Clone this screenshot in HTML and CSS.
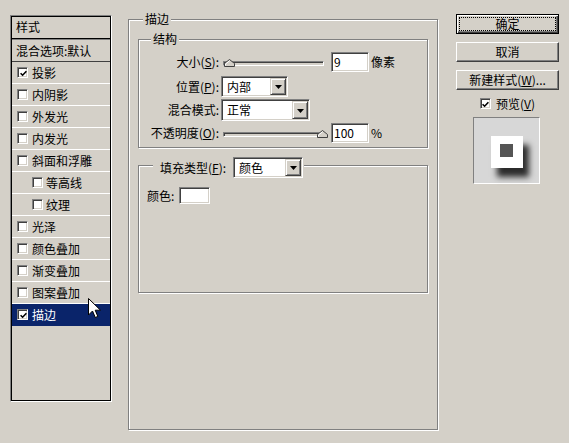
FILE: index.html
```html
<!DOCTYPE html>
<html lang="zh-CN">
<head>
<meta charset="utf-8">
<title>图层样式</title>
<link rel="stylesheet" href="styles.css">
</head>
<body>
<div class="dialog">
  <div class="styles-panel">
    <div class="panel-head">样式</div>
    <div class="panel-blend">混合选项:默认</div>
    <div class="item"><span class="cb"><svg width="7" height="7" viewBox="0 0 7 7"><path d="M0.6 3.2 L2.6 5.2 L6.4 1.2" fill="none" stroke="#000" stroke-width="1.6"/></svg></span>投影</div>
    <div class="item"><span class="cb"></span>内阴影</div>
    <div class="item"><span class="cb"></span>外发光</div>
    <div class="item"><span class="cb"></span>内发光</div>
    <div class="item"><span class="cb"></span>斜面和浮雕</div>
    <div class="item sub"><span class="cb"></span>等高线</div>
    <div class="item sub"><span class="cb"></span>纹理</div>
    <div class="item"><span class="cb"></span>光泽</div>
    <div class="item"><span class="cb"></span>颜色叠加</div>
    <div class="item"><span class="cb"></span>渐变叠加</div>
    <div class="item"><span class="cb"></span>图案叠加</div>
    <div class="item selected"><span class="cb"><svg width="7" height="7" viewBox="0 0 7 7"><path d="M0.6 3.2 L2.6 5.2 L6.4 1.2" fill="none" stroke="#000" stroke-width="1.6"/></svg></span>描边</div>
  </div>

  <div class="group main-group">
    <span class="group-title">描边</span>

    <div class="group structure">
      <span class="group-title">结构</span>

      <div class="form-row r1">
        <label class="lbl">大小(<u>S</u>):</label>
        <div class="slider">
          <div class="track"></div>
          <svg class="thumb thumb-min" width="11" height="8" viewBox="0 0 11 8"><polygon points="0.5,7.5 0.5,4.5 5.5,0.5 10.5,4.5 10.5,7.5" fill="#d4d0c8" stroke="#404040"/><path d="M1.5 6.5 V5 L5.5 1.8" fill="none" stroke="#fff"/></svg>
        </div>
        <div class="edit">9</div>
        <span class="unit">像素</span>
      </div>

      <div class="form-row r2">
        <label class="lbl">位置(<u>P</u>):</label>
        <div class="combo combo-pos"><span class="combo-text">内部</span><span class="drop"><svg width="7" height="4" viewBox="0 0 7 4"><polygon points="0,0 7,0 3.5,4" fill="#000"/></svg></span></div>
      </div>

      <div class="form-row r3">
        <label class="lbl">混合模式:</label>
        <div class="combo combo-mode"><span class="combo-text">正常</span><span class="drop"><svg width="7" height="4" viewBox="0 0 7 4"><polygon points="0,0 7,0 3.5,4" fill="#000"/></svg></span></div>
      </div>

      <div class="form-row r4">
        <label class="lbl">不透明度(<u>O</u>):</label>
        <div class="slider">
          <div class="track"></div>
          <svg class="thumb thumb-max" width="11" height="8" viewBox="0 0 11 8"><polygon points="0.5,7.5 0.5,4.5 5.5,0.5 10.5,4.5 10.5,7.5" fill="#d4d0c8" stroke="#404040"/><path d="M1.5 6.5 V5 L5.5 1.8" fill="none" stroke="#fff"/></svg>
        </div>
        <div class="edit">100</div>
        <span class="unit">%</span>
      </div>
    </div>

    <div class="group fill">
      <div class="fill-title">
        <label class="fill-lbl">填充类型(<u>F</u>):</label>
        <div class="combo combo-fill"><span class="combo-text">颜色</span><span class="drop"><svg width="7" height="4" viewBox="0 0 7 4"><polygon points="0,0 7,0 3.5,4" fill="#000"/></svg></span></div>
      </div>
      <div class="color-row">
        <label class="color-lbl">颜色:</label>
        <span class="color-swatch"></span>
      </div>
    </div>
  </div>

  <div class="side">
    <div class="btn default"><span class="focus">确定</span></div>
    <div class="btn">取消</div>
    <div class="btn">新建样式(<u>W</u>)...</div>
    <div class="preview-check"><span class="cb"><svg width="7" height="7" viewBox="0 0 7 7"><path d="M0.6 3.2 L2.6 5.2 L6.4 1.2" fill="none" stroke="#000" stroke-width="1.6"/></svg></span><span>预览(<u>V</u>)</span></div>
    <div class="preview-box">
      <div class="preview-tile"><div class="preview-core"></div></div>
    </div>
  </div>
</div>

<svg class="cursor" width="14" height="22" viewBox="0 0 14 22"><path d="M0.5 0.5 L0.5 17 L4.5 13 L7.3 19.5 L9.8 18.4 L7.2 12.2 L12.5 12.2 Z" fill="#fff" stroke="#000" stroke-width="1" stroke-linejoin="miter"/></svg>
</body>
</html>
```

FILE: styles.css
```css
* { box-sizing: border-box; }

html, body {
  margin: 0;
  padding: 0;
}

body {
  background: #d4d0c8;
  font-family: "Noto Sans CJK SC", "Noto Sans", sans-serif;
  font-size: 12px;
  line-height: 14px;
  color: #000;
  width: 569px;
  height: 443px;
  overflow: hidden;
  position: relative;
}

u { text-decoration: underline; text-underline-offset: 1px; }

.dialog {
  display: flex;
  align-items: flex-start;
  padding-left: 10px;
}

/* ---------- left style list ---------- */
.styles-panel {
  margin-top: 15px;
  width: 102px;
  height: 387px;
  padding: 1px;
  border: 1px solid;
  border-color: #808080 #fff #fff #808080;
  box-shadow: inset 1px 1px 0 #000, inset -1px -1px 0 #000;
}

.panel-head {
  height: 22px;
  padding: 3px 0 0 4px;
  border-bottom: 1px solid #000;
}

.panel-blend {
  height: 23px;
  padding: 4px 0 0 4px;
  border-top: 1px solid #808080;
  border-bottom: 1px solid #404040;
}

.item {
  height: 22px;
  display: flex;
  align-items: center;
  gap: 4px;
  padding-left: 5px;
  border-bottom: 1px solid #fff;
}

.item.sub {
  padding-left: 20px;
  gap: 3px;
}

.item.selected {
  background: #0a246a;
  color: #fff;
  border-bottom-color: #0a246a;
}

.cb {
  width: 11px;
  height: 11px;
  flex: none;
  background: #fff;
  border: 1px solid;
  border-color: #808080 #fff #fff #808080;
  box-shadow: inset 1px 1px 0 #404040, inset -1px -1px 0 #d4d0c8;
  display: flex;
  align-items: center;
  justify-content: center;
}

.cb svg { display: block; margin: 1px 0 0 1px; }

/* ---------- group boxes ---------- */
.group {
  position: relative;
  border: 1px solid #808080;
  box-shadow: 1px 1px 0 #fff, inset 1px 1px 0 #fff;
}

.group-title {
  position: absolute;
  top: -8px;
  left: 14px;
  padding: 0 2px;
  background: #d4d0c8;
}

.main-group {
  margin-left: 16px;
  margin-top: 19px;
  width: 310px;
  height: 411px;
  padding: 19px 0 0 9px;
}

.structure {
  width: 290px;
  height: 109px;
  padding-top: 12px;
}

.structure .group-title { left: 12px; }

.form-row {
  display: flex;
  align-items: center;
}

.r1 { height: 20px; }
.r2 { height: 21px; margin-top: 4px; }
.r3 { height: 22px; margin-top: 2px; }
.r4 { height: 20px; margin-top: 2px; }

.lbl {
  width: 80px;
  text-align: right;
  white-space: nowrap;
}

.slider {
  position: relative;
  width: 101px;
  height: 20px;
  margin-left: 4px;
  padding-top: 9px;
}

.track {
  width: 101px;
  height: 5px;
  background: #d4d0c8;
  border: 1px solid;
  border-color: #808080 #fff #fff #808080;
  box-shadow: inset 1px 1px 0 #404040;
}

.thumb {
  position: absolute;
  top: 7px;
  display: block;
}

.thumb-min { left: 1px; }
.thumb-max { left: 94px; }

.edit {
  width: 38px;
  height: 20px;
  margin-left: 7px;
  padding-left: 2px;
  background: #fff;
  border: 1px solid;
  border-color: #808080 #fff #fff #808080;
  box-shadow: inset 1px 1px 0 #404040, inset -1px -1px 0 #d4d0c8;
  display: flex;
  align-items: center;
}

.unit { margin-left: 2px; }

.combo {
  display: flex;
  margin-left: 2px;
  padding: 1px;
  background: #fff;
  border: 1px solid;
  border-color: #808080 #fff #fff #808080;
  box-shadow: inset 1px 1px 0 #404040, inset -1px -1px 0 #d4d0c8;
}

.combo-pos { width: 67px; height: 21px; }
.combo-mode { width: 89px; height: 22px; }
.combo-fill { width: 70px; height: 21px; margin-left: 0; }

.combo-text {
  flex: 1;
  padding-left: 4px;
  display: flex;
  align-items: center;
}

.drop {
  width: 16px;
  flex: none;
  background: #d4d0c8;
  border: 1px solid;
  border-color: #d4d0c8 #404040 #404040 #d4d0c8;
  box-shadow: inset 1px 1px 0 #fff, inset -1px -1px 0 #808080;
  display: flex;
  align-items: center;
  justify-content: center;
}

.drop svg { display: block; margin-top: 1px; }

.fill {
  margin-top: 17px;
  width: 290px;
  height: 128px;
  padding: 21px 0 0 8px;
}

.fill-title {
  position: absolute;
  top: -9px;
  left: 14px;
  display: flex;
  align-items: center;
  padding: 0 1px 0 7px;
  background: #d4d0c8;
}

.fill-lbl {
  width: 73px;
  white-space: nowrap;
}

.color-row {
  display: flex;
  align-items: center;
  height: 17px;
}

.color-lbl { width: 32px; }

.color-swatch {
  width: 31px;
  height: 17px;
  background: #fff;
  border: 1px solid;
  border-color: #808080 #fff #fff #808080;
  box-shadow: inset 1px 1px 0 #404040, inset -1px -1px 0 #d4d0c8;
}

/* ---------- right column ---------- */
.side {
  margin-left: 18px;
  margin-top: 14px;
  width: 103px;
  display: flex;
  flex-direction: column;
}

.btn {
  height: 20px;
  margin-bottom: 8px;
  border: 1px solid;
  border-color: #fff #404040 #404040 #fff;
  box-shadow: inset -1px -1px 0 #808080;
  display: flex;
  align-items: center;
  justify-content: center;
  white-space: nowrap;
}

.btn:nth-child(3) { margin-bottom: 0; }

.btn.default {
  border: 1px solid #000;
  box-shadow: inset 1px 1px 0 #fff, inset -1px -1px 0 #404040, inset -2px -2px 0 #808080;
  padding: 2px;
  display: block;
}

.focus {
  display: flex;
  align-items: center;
  justify-content: center;
  height: 14px;
  border: 1px dotted #000;
}

.preview-check {
  margin-top: 7px;
  height: 13px;
  display: flex;
  align-items: center;
  justify-content: center;
  gap: 5px;
}

.preview-box {
  margin-top: 7px;
  margin-left: 17px;
  width: 67px;
  height: 67px;
  background: #d7d7d7;
  border: 1px solid;
  border-color: #808080 #fff #fff #808080;
  display: flex;
  align-items: center;
  justify-content: center;
  padding-top: 2px;
}

.preview-tile {
  width: 32px;
  height: 32px;
  background: #fff;
  box-shadow: 6px 9px 6px rgba(0, 0, 0, 0.8);
  display: flex;
  align-items: center;
  justify-content: center;
}

.preview-core {
  width: 13px;
  height: 13px;
  background: #555;
  margin-top: -2px;
}

/* mouse pointer over the list */
.cursor {
  position: absolute;
  left: 88px;
  top: 298px;
}
```
